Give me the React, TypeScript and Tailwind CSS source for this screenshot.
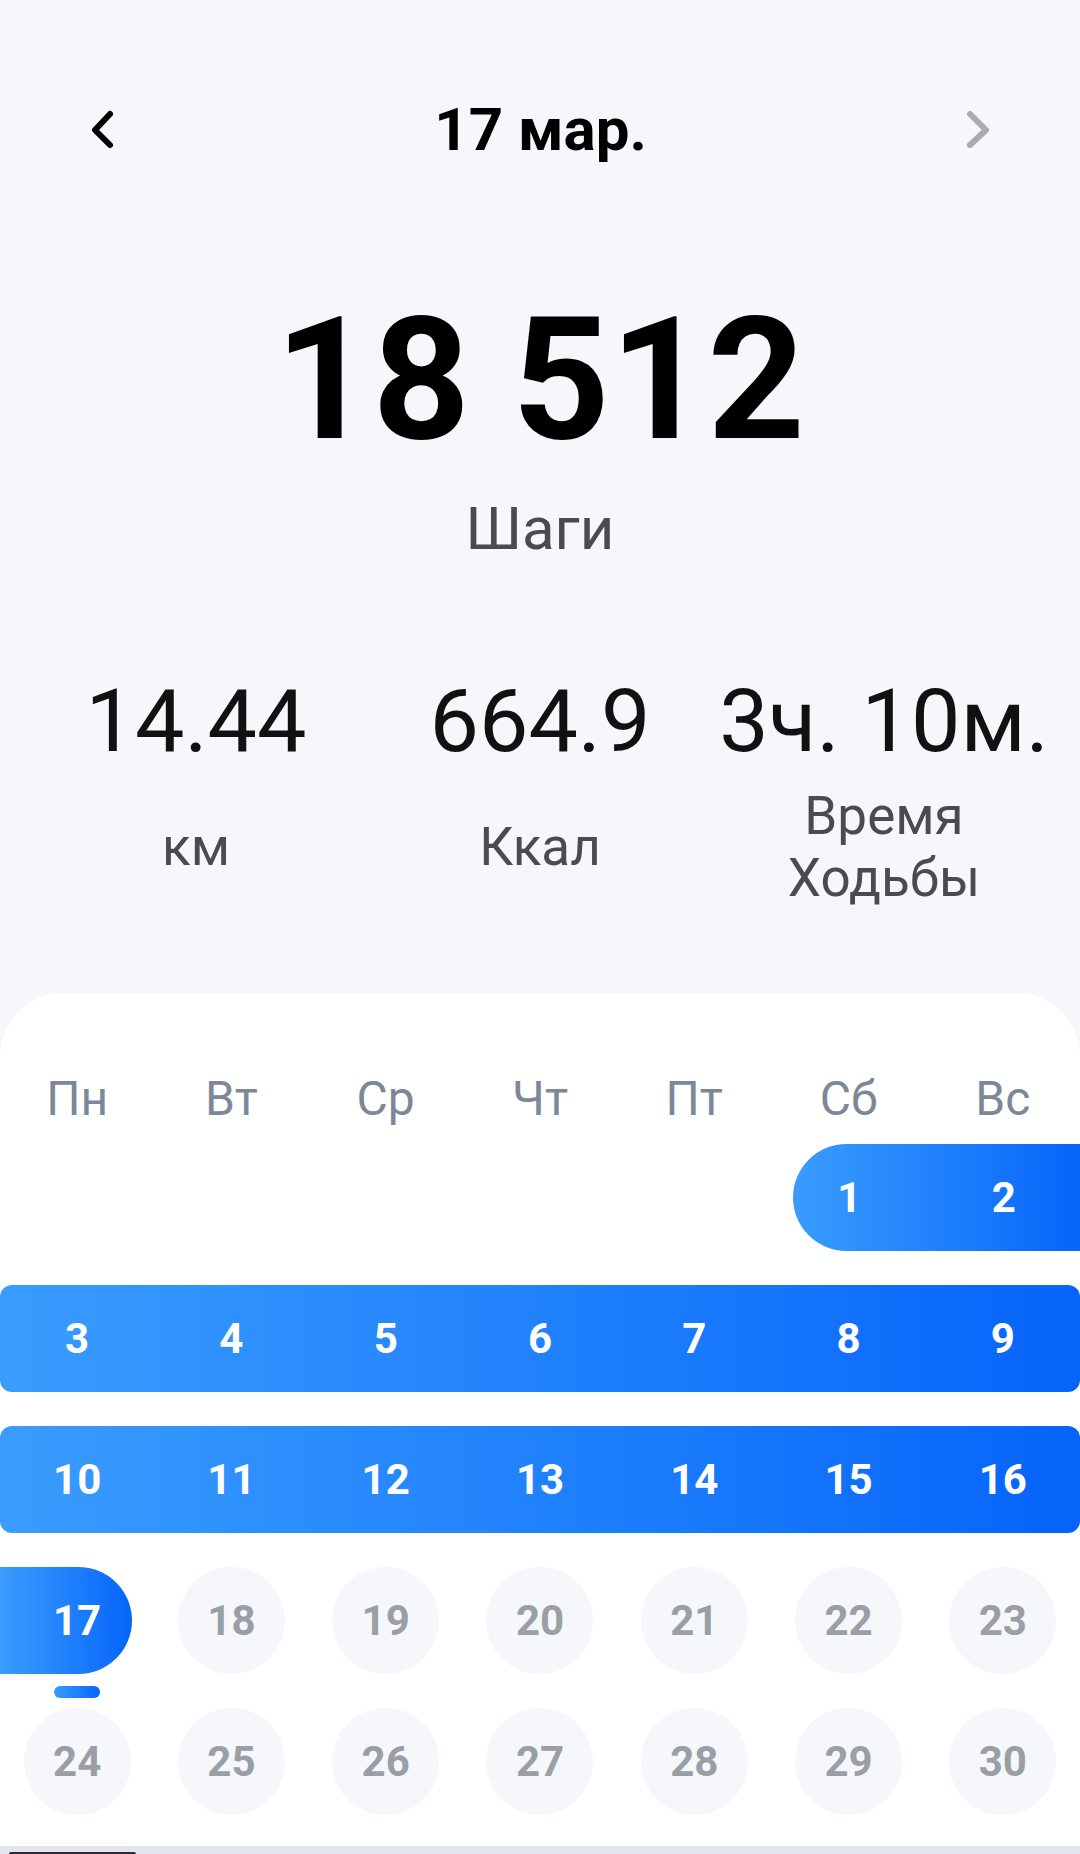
import React from "react";

const font = { fontFamily: "Roboto, 'Noto Sans', sans-serif" };

const weekDays = ["Пн", "Вт", "Ср", "Чт", "Пт", "Сб", "Вс"];

function Chevron({ dir }: { dir: "left" | "right" }) {
    const points = dir === "left" ? "27,4 12,20 27,35" : "12,4 28,20 12,35";
    return (
        <svg width="40" height="40" viewBox="0 0 40 40" fill="none">
            <polyline
                points={points}
                stroke={dir === "left" ? "#000000" : "#ababab"}
                strokeWidth="6"
                strokeLinecap="round"
                strokeLinejoin="round"
            />
        </svg>
    );
}

function Circle({ n }: { n: number }) {
    return (
        <div className="flex justify-center">
            <div className="w-[107px] h-[107px] rounded-full bg-[#f6f7fa] flex items-center justify-center text-[42px] leading-none font-bold text-[#9a9ea6]">
                {n}
            </div>
        </div>
    );
}

function BlueRow({ days }: { days: number[] }) {
    return (
        <div className="h-[107px] grid grid-cols-7 rounded-[12px] bg-gradient-to-r from-[#3a9cfd] to-[#0664fa]">
            {days.map((d) => (
                <div
                    key={d}
                    className="flex items-center justify-center text-[42px] leading-none font-bold text-white"
                >
                    {d}
                </div>
            ))}
        </div>
    );
}

export default function App() {
    return (
        <div className="w-[1080px] h-[1854px] bg-[#f7f7fb] flex flex-col overflow-hidden" style={font}>
            {/* header */}
            <div className="pt-[100px] flex items-center justify-between h-[160px]">
                <div className="ml-[83px]">
                    <Chevron dir="left" />
                </div>
                <h1 className="text-[60px] leading-none font-bold text-black">17 мар.</h1>
                <div className="mr-[82px]">
                    <Chevron dir="right" />
                </div>
            </div>

            <p className="mt-[135px] text-center text-[170px] leading-none font-bold text-black">
                18 512
            </p>
            <p className="mt-[34px] text-center text-[60px] leading-none text-[#4b4b4d]">Шаги</p>

            {/* stats */}
            <div className="mt-[118px] px-6 grid grid-cols-3">
                {["14.44", "664.9", "3ч. 10м."].map((v) => (
                    <p key={v} className="text-center text-[88px] leading-none text-[#111111] whitespace-nowrap">
                        {v}
                    </p>
                ))}
            </div>
            <div className="mt-[20px] px-6 grid grid-cols-3 items-center h-[124px]">
                <p className="text-center text-[53px] leading-[62px] text-[#4b4b4f]">км</p>
                <p className="text-center text-[53px] leading-[62px] text-[#4b4b4f]">Ккал</p>
                <p className="text-center text-[53px] leading-[62px] text-[#4b4b4f]">
                    Время
                    <br />
                    Ходьбы
                </p>
            </div>

            {/* calendar card */}
            <div className="mt-[84px] flex-1 bg-white rounded-t-[64px] pt-[82px] flex flex-col">
                <div className="grid grid-cols-7">
                    {weekDays.map((w) => (
                        <p key={w} className="text-center text-[48px] leading-none text-[#7c889a]">
                            {w}
                        </p>
                    ))}
                </div>

                <div className="mt-[21px] flex flex-col gap-[34px]">
                    {/* week 1 */}
                    <div className="h-[107px] grid grid-cols-7">
                        <div className="col-start-6 col-span-2 ml-[22px] grid grid-cols-[112px_1fr] rounded-l-full rounded-r-[12px] bg-gradient-to-r from-[#3a9cfd] to-[#0664fa]">
                            <div className="flex items-center justify-center text-[42px] leading-none font-bold text-white">
                                1
                            </div>
                            <div className="pl-[22px] flex items-center justify-center text-[42px] leading-none font-bold text-white">
                                2
                            </div>
                        </div>
                    </div>

                    <BlueRow days={[3, 4, 5, 6, 7, 8, 9]} />
                    <BlueRow days={[10, 11, 12, 13, 14, 15, 16]} />

                    {/* week 4 */}
                    <div className="h-[107px] grid grid-cols-7">
                        <div className="relative">
                            <div className="w-[132px] h-[107px] pl-[22px] rounded-l-[12px] rounded-r-full bg-gradient-to-r from-[#3a9cfd] to-[#0664fa] flex items-center justify-center text-[42px] leading-none font-bold text-white">
                                17
                            </div>
                            <div className="absolute left-[54px] top-[119px] w-[46px] h-[12px] rounded-full bg-gradient-to-r from-[#3a9cfd] to-[#0664fa]" />
                        </div>
                        {[18, 19, 20, 21, 22, 23].map((d) => (
                            <Circle key={d} n={d} />
                        ))}
                    </div>

                    {/* week 5 */}
                    <div className="h-[107px] grid grid-cols-7">
                        {[24, 25, 26, 27, 28, 29, 30].map((d) => (
                            <Circle key={d} n={d} />
                        ))}
                    </div>
                </div>
            </div>

            {/* bottom strip */}
            <div className="h-[8px] bg-[#e4e6ee] flex items-end">
                <div className="ml-[9px] w-[127px] h-[2px] rounded-t-full bg-[#2b2b33]" />
            </div>
        </div>
    );
}
